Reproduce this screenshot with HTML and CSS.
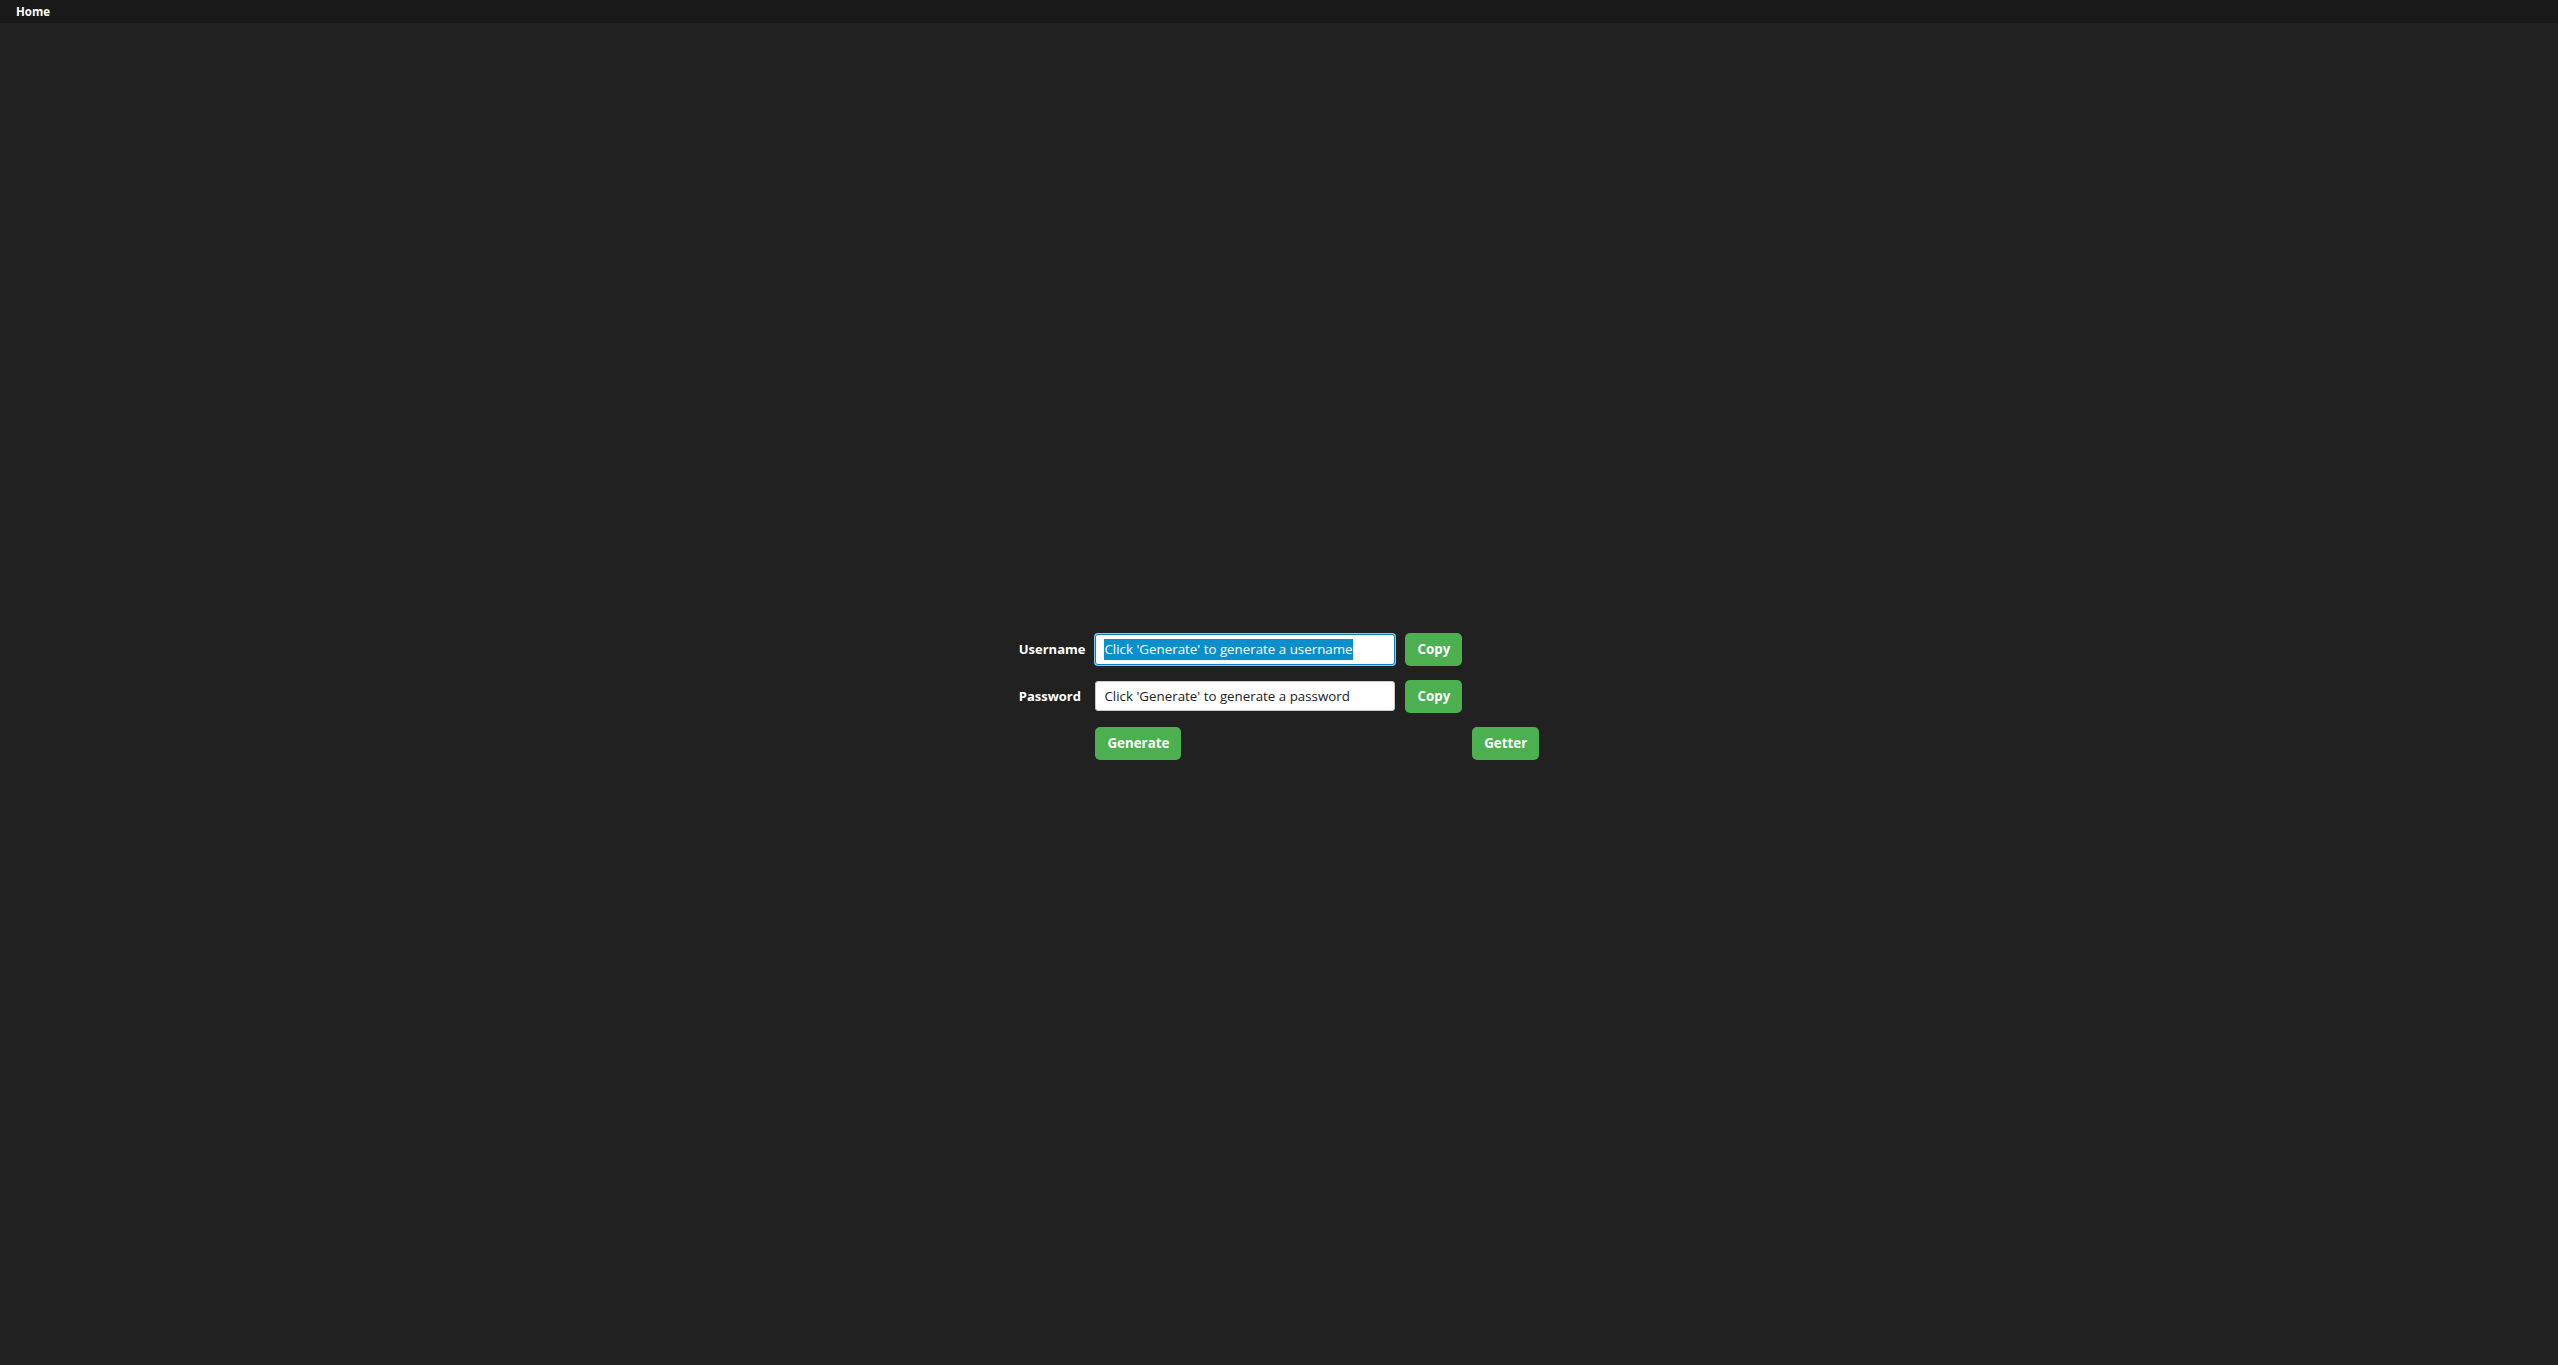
FILE: index.html
```html
<!DOCTYPE html>
<html lang="en">
<head>
<meta charset="utf-8">
<title>Home</title>
<link rel="stylesheet" href="styles.css">
</head>
<body>
<nav class="topbar"><span class="nav-item">Home</span></nav>
<main class="main">
  <div class="form">
    <label class="label">Username</label>
    <div class="field field--focused"><span class="sel">Click 'Generate' to generate a username</span></div>
    <button class="btn">Copy</button>
    <div class="spacer"></div>

    <label class="label">Password</label>
    <div class="field"><span class="val">Click 'Generate' to generate a password</span></div>
    <button class="btn">Copy</button>
    <div class="spacer"></div>

    <div class="spacer"></div>
    <div class="cell-left"><button class="btn">Generate</button></div>
    <div class="spacer"></div>
    <button class="btn">Getter</button>
  </div>
</main>
</body>
</html>
```

FILE: styles.css
```css
html, body {
  margin: 0;
  padding: 0;
}
body {
  background: #212121;
  font-family: "Segoe UI", "Open Sans", "Noto Sans", sans-serif;
  color: #fff;
}
.topbar {
  height: 23px;
  background: #191919;
  display: flex;
  align-items: center;
  padding: 0 16px;
}
.nav-item {
  font-size: 11.5px;
  font-weight: 700;
  color: #fff;
}
.main {
  min-height: calc(100vh - 23px);
  box-sizing: border-box;
  padding-top: 4px;
  display: flex;
  align-items: center;
  justify-content: center;
}
.form {
  display: grid;
  grid-template-columns: auto 300px auto auto;
  grid-auto-rows: 33px;
  column-gap: 10px;
  row-gap: 14px;
  align-items: center;
}
.label {
  font-size: 13px;
  font-weight: 700;
  color: #fff;
  line-height: 1;
  padding-top: 1px;
  white-space: nowrap;
}
.field {
  box-sizing: border-box;
  height: 30px;
  background: #fff;
  border: 1px solid #c8c8c8;
  border-radius: 3px;
  padding: 0 8px;
  display: flex;
  align-items: center;
  font-size: 13.33px;
  color: #222;
  white-space: nowrap;
  overflow: hidden;
}
.field--focused {
  height: 31px;
  border-color: #0a7fc0;
  box-shadow: 0 0 0 1px #7fcdf0;
}
.sel {
  background: #0a8fcc;
  color: #fff;
  line-height: 21px;
}
.cell-left {
  display: flex;
}
.btn {
  height: 33px;
  border: none;
  border-radius: 5px;
  background: #4caf50;
  color: #fff;
  font-family: inherit;
  font-size: 13.33px;
  font-weight: 700;
  padding: 0 12px;
  cursor: pointer;
}
```
